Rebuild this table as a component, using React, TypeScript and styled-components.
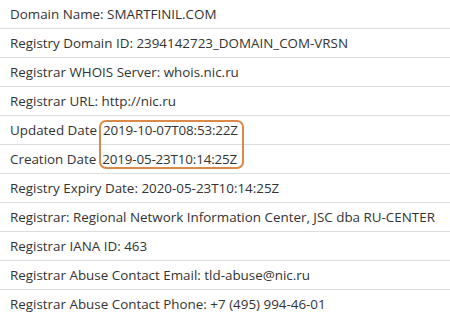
import React from "react";
import styled, { createGlobalStyle } from "styled-components";

const Global = createGlobalStyle`
  html, body { margin: 0; padding: 0; background: #fff; }
  body { font-family: "Open Sans", "Noto Sans", sans-serif; }
`;

const Page = styled.div`
  position: relative;
  width: 450px;
  height: 318px;
  overflow: hidden;
  background: #fff;
`;

const List = styled.div`
  display: flex;
  flex-direction: column;
`;

const Row = styled.div<{ $last?: boolean }>`
  height: 28px;
  display: flex;
  align-items: center;
  padding-left: 10px;
  font-size: 13.4px;
  color: #333;
  white-space: nowrap;
  border-bottom: ${(p) => (p.$last ? "none" : "1px solid #dcdcdc")};
`;

const DateValue = styled.span`
  margin-left: 6px;
  letter-spacing: -0.15px;
`;

const Highlight = styled.div`
  position: absolute;
  left: 99px;
  top: 120px;
  width: 141px;
  height: 45px;
  border: 2px solid #d98a4a;
  border-radius: 7px;
`;

const rows: { label: string; value?: string }[] = [
  { label: "Domain Name: SMARTFINIL.COM" },
  { label: "Registry Domain ID: 2394142723_DOMAIN_COM-VRSN" },
  { label: "Registrar WHOIS Server: whois.nic.ru" },
  { label: "Registrar URL: http://nic.ru" },
  { label: "Updated Date", value: "2019-10-07T08:53:22Z" },
  { label: "Creation Date", value: "2019-05-23T10:14:25Z" },
  { label: "Registry Expiry Date: 2020-05-23T10:14:25Z" },
  { label: "Registrar: Regional Network Information Center, JSC dba RU-CENTER" },
  { label: "Registrar IANA ID: 463" },
  { label: "Registrar Abuse Contact Email: tld-abuse@nic.ru" },
  { label: "Registrar Abuse Contact Phone: +7 (495) 994-46-01" },
];

export default function App() {
  return (
    <>
      <Global />
      <Page>
        <List>
          {rows.map((r, i) => (
            <Row key={i} $last={i === rows.length - 1}>
              {r.label}
              {r.value && <DateValue>{r.value}</DateValue>}
            </Row>
          ))}
        </List>
        <Highlight />
      </Page>
    </>
  );
}
